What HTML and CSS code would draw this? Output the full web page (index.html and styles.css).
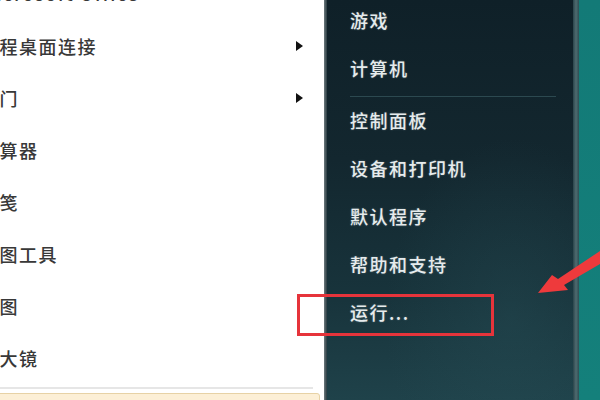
FILE: index.html
```html
<!DOCTYPE html>
<html lang="zh-CN">
<head>
<meta charset="utf-8">
<link rel="stylesheet" href="styles.css">
</head>
<body>
<div class="screen">
  <div class="left">
    <ul class="programs">
      <li class="item">Microsoft Office</li>
      <li class="item has-sub">远程桌面连接<span class="tri"></span></li>
      <li class="item has-sub">入门<span class="tri"></span></li>
      <li class="item">计算器</li>
      <li class="item">便笺</li>
      <li class="item">截图工具</li>
      <li class="item">画图</li>
      <li class="item">放大镜</li>
    </ul>
    <div class="sep"></div>
    <div class="allprog">所有程序</div>
  </div>
  <div class="edge"></div>
  <div class="right">
    <ul class="links">
      <li class="link">游戏</li>
      <li class="link">计算机</li>
      <li class="divider"></li>
      <li class="link">控制面板</li>
      <li class="link">设备和打印机</li>
      <li class="link">默认程序</li>
      <li class="link">帮助和支持</li>
      <li class="link">运行...</li>
    </ul>
  </div>
  <div class="rim"></div>
  <div class="desktop"></div>

  <div class="highlight-box"></div>
  <svg class="arrow" width="80" height="70" viewBox="520 240 80 70">
    <polygon points="538,293 552,275 558,279 600,251 600,264 564,285 568,290" fill="#ee3a3c"/>
  </svg>
</div>
</body>
</html>
```

FILE: styles.css
```css
* { box-sizing: border-box; }
html, body {
  margin: 0;
  padding: 0;
  width: 600px;
  height: 400px;
  overflow: hidden;
  background: #127a76;
}
.screen {
  position: relative;
  display: flex;
  width: 600px;
  height: 400px;
  overflow: hidden;
  font-family: "Noto Sans CJK SC", "Noto Sans", sans-serif;
}
ul { list-style: none; margin: 0; padding: 0; }

.left {
  width: 324px;
  flex: none;
  background: #fff;
  overflow: hidden;
}
.programs {
  margin: -35px 0 0 -20px;
}
.item {
  position: relative;
  height: 52px;
  display: flex;
  align-items: center;
  font-size: 18px;
  font-weight: 500;
  letter-spacing: 1.5px;
  color: #383838;
  white-space: nowrap;
}
.programs .item:first-child { height: 55px; }
.tri {
  position: absolute;
  left: 316px;
  top: 21px;
  width: 0;
  height: 0;
  border-top: 5px solid transparent;
  border-bottom: 5px solid transparent;
  border-left: 7px solid #111;
}
.sep {
  margin: 3px 11px 0 0;
  height: 2px;
  background: #e6e6e6;
}
.allprog {
  margin: 4px 4px 0 -6px;
  height: 30px;
  padding: 3px 0 0 20px;
  background: #fcefd6;
  border: 1px solid #e7d2a6;
  border-radius: 3px;
  font-size: 18px;
  color: #353535;
}

.edge {
  width: 3px;
  flex: none;
  background: linear-gradient(to right, #6d7a7e, #2a3b41);
}
.right {
  width: 246px;
  flex: none;
  background:
    radial-gradient(ellipse 180px 260px at 75% 80%, rgba(40,80,88,0.35), rgba(40,80,88,0) 70%),
    linear-gradient(to bottom, #0f2028 0%, #13272f 40%, #18343c 75%, #1f424a 100%);
  padding-left: 23px;
}
.links { margin-top: -4px; }
.link {
  height: 48px;
  display: flex;
  align-items: center;
  font-size: 18px;
  font-weight: 500;
  letter-spacing: 1.5px;
  color: #e6ebec;
  text-shadow: 0 0 2px rgba(200,220,225,0.35);
  white-space: nowrap;
}
.divider {
  height: 5px;
  margin-right: 17px;
  border-bottom: 1px solid #2c4950;
  margin-bottom: -1px;
}
.rim {
  width: 6px;
  flex: none;
  background: linear-gradient(to right, #2a444a, #4f6b70 50%, #2d4e53);
}
.desktop {
  flex: 1;
  background: linear-gradient(to bottom, #137a77, #14807b);
}

.highlight-box {
  position: absolute;
  left: 297px;
  top: 294px;
  width: 197px;
  height: 42px;
  border: 3px solid #e6343b;
}
.arrow {
  position: absolute;
  left: 520px;
  top: 240px;
}
```
